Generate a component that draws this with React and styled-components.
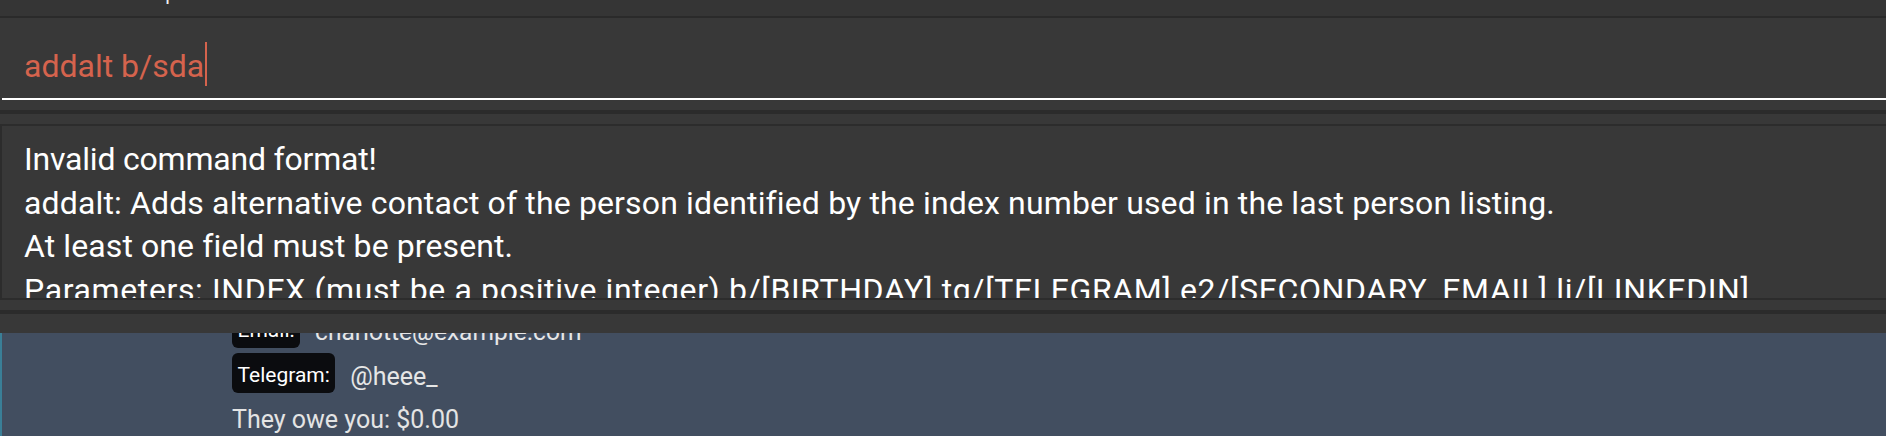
import React from "react";
import styled, { createGlobalStyle } from "styled-components";

const GlobalStyle = createGlobalStyle`
  html, body {
    margin: 0;
    padding: 0;
    background: #383838;
    overflow: hidden;
  }
  body {
    font-family: Roboto, "Liberation Sans", sans-serif;
  }
  * { box-sizing: border-box; }
`;

const Window = styled.div`
  width: 1886px;
  height: 436px;
  display: flex;
  flex-direction: column;
  background: #383838;
  overflow: hidden;
`;

const MenuBar = styled.div`
  flex: 0 0 18px;
  display: flex;
  align-items: flex-end;
  gap: 29px;
  padding-left: 75px;
  background: #353535;
  border-bottom: 2px solid #2a2a2a;
  overflow: hidden;
`;

const MenuItem = styled.span`
  font-size: 20px;
  line-height: 20px;
  padding-bottom: 12.8px;
  color: #f2f2f2;
`;

const CommandPane = styled.div`
  flex: 0 0 96px;
  padding: 0 0 10px 2px;
  background: #383838;
  border-bottom: 4px solid #2b2b2b;
`;

const CommandField = styled.div`
  height: 82px;
  display: flex;
  align-items: flex-start;
  padding: 24px 0 0 22px;
  border-bottom: 2px solid #ffffff;
`;

const CommandText = styled.span`
  font-size: 32px;
  line-height: 44px;
  padding-top: 2px;
  color: #d5634d;
  white-space: pre;
`;

const Caret = styled.span`
  width: 2px;
  height: 44px;
  margin-left: 1px;
  background: #d5634d;
`;

const ResultPane = styled.div`
  flex: 0 0 200px;
  padding: 10px 0;
  background: #383838;
  border-bottom: 4px solid #2b2b2b;
`;

const ResultBox = styled.div`
  height: 176px;
  overflow: hidden;
  padding: 12.3px 0 0 22px;
  border: 2px solid #2c2c2c;
  border-right: none;
  background: #383838;
`;

const ResultLine = styled.div`
  font-size: 32px;
  line-height: 43.5px;
  letter-spacing: ${(p) => p.$tracking}px;
  color: #ffffff;
  white-space: nowrap;
`;

const ListPane = styled.div`
  flex: 1 1 auto;
  min-height: 0;
  display: flex;
  flex-direction: column;
  padding-top: 19px;
  background: #383838;
`;

const ListViewport = styled.div`
  flex: 1 1 auto;
  min-height: 0;
  display: flex;
  flex-direction: column;
  justify-content: flex-end;
  overflow: hidden;
  background: #424e60;
`;

const PersonCard = styled.div`
  display: flex;
  flex-direction: column;
  gap: 5px;
  padding: 0 0 1px 230px;
  border-left: 2px solid #3a7f97;
`;

const FieldRow = styled.div`
  display: flex;
  align-items: center;
`;

const Badge = styled.span`
  height: 40px;
  display: flex;
  align-items: center;
  padding: 3px 5.5px 0;
  border-radius: 6px;
  background: #0b0c0f;
  color: #ffffff;
  font-size: 21px;
`;

const FieldValue = styled.span`
  margin-left: 15px;
  padding-top: 6px;
  font-size: ${(p) => p.$size || 25}px;
  color: #e6e6e6;
`;

const PlainLine = styled.div`
  margin-top: ${(p) => p.$offset || 0}px;
  font-size: 25px;
  line-height: 30px;
  color: #e4e4e4;
`;

const resultLines = [
  { text: "Invalid command format!", tracking: -0.2 },
  {
    text: "addalt: Adds alternative contact of the person identified by the index number used in the last person listing.",
    tracking: 0.14,
  },
  { text: "At least one field must be present.", tracking: 0.1 },
  {
    text: "Parameters: INDEX (must be a positive integer) b/[BIRTHDAY] tg/[TELEGRAM] e2/[SECONDARY_EMAIL] li/[LINKEDIN]",
    tracking: 0.62,
  },
];

export default function App() {
  return (
    <>
      <GlobalStyle />
      <Window>
        <MenuBar>
          <MenuItem>File</MenuItem>
          <MenuItem>Help</MenuItem>
        </MenuBar>
        <CommandPane>
          <CommandField>
            <CommandText>addalt b/sda</CommandText>
            <Caret />
          </CommandField>
        </CommandPane>
        <ResultPane>
          <ResultBox>
            {resultLines.map((line) => (
              <ResultLine key={line.text} $tracking={line.tracking}>
                {line.text}
              </ResultLine>
            ))}
          </ResultBox>
        </ResultPane>
        <ListPane>
          <ListViewport>
            <PersonCard>
              <FieldRow>
                <Badge>Email:</Badge>
                <FieldValue $size={24.5}>charlotte@example.com</FieldValue>
              </FieldRow>
              <FieldRow>
                <Badge>Telegram:</Badge>
                <FieldValue>@heee_</FieldValue>
              </FieldRow>
              <PlainLine $offset={7}>They owe you: $0.00</PlainLine>
            </PersonCard>
          </ListViewport>
        </ListPane>
      </Window>
    </>
  );
}
